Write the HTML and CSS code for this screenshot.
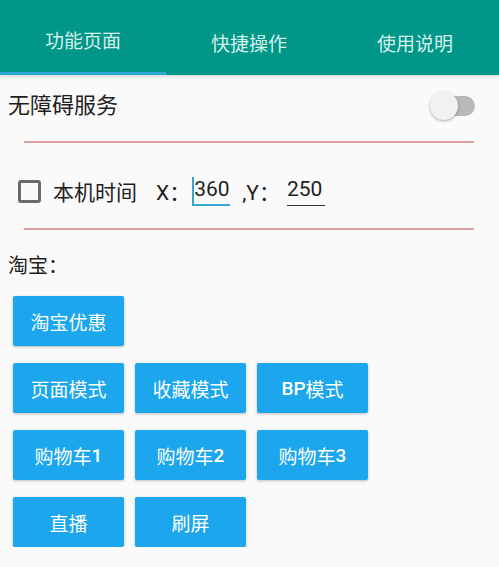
FILE: index.html
```html
<!DOCTYPE html>
<html lang="zh">
<head>
<meta charset="utf-8">
<link rel="stylesheet" href="styles.css">
</head>
<body>
<div class="tabs">
  <div class="tab active">功能页面</div>
  <div class="tab">快捷操作</div>
  <div class="tab">使用说明</div>
</div>
<div class="row service">
  <span class="label">无障碍服务</span>
  <div class="switch"><div class="track"></div><div class="thumb"></div></div>
</div>
<div class="divider"></div>
<div class="row time">
  <span class="checkbox"></span>
  <span class="tlabel">本机时间</span>
  <span class="coord">X：</span>
  <span class="input focused"><span class="cursor"></span>360</span>
  <span class="coord sep">,Y：</span>
  <span class="input second">250</span>
</div>
<div class="divider"></div>
<div class="section">淘宝：</div>
<div class="buttons">
  <div class="brow"><div class="btn">淘宝优惠</div></div>
  <div class="brow"><div class="btn">页面模式</div><div class="btn">收藏模式</div><div class="btn"><span class="latin">BP</span>模式</div></div>
  <div class="brow"><div class="btn">购物车<span class="latin">1</span></div><div class="btn">购物车<span class="latin">2</span></div><div class="btn">购物车<span class="latin">3</span></div></div>
  <div class="brow"><div class="btn">直播</div><div class="btn">刷屏</div></div>
</div>
</body>
</html>
```

FILE: styles.css
```css
html, body {
  margin: 0;
  padding: 0;
  background: #fafafa;
  font-family: Roboto, "Noto Sans CJK SC", sans-serif;
  color: #1e1e1e;
}
.tabs {
  display: flex;
  height: 75px;
  background: #009688;
  box-shadow: 0 2px 3px rgba(0,0,0,0.12);
  position: relative;
}
.tab {
  width: 166px;
  box-sizing: border-box;
  display: flex;
  align-items: center;
  justify-content: center;
  padding-top: 9px;
  font-size: 19px;
  color: #d6f1ec;
}
.tab.active {
  border-bottom: 3px solid #2ea8d3;
  padding-top: 6px;
}
.row {
  display: flex;
  align-items: center;
}
.service {
  height: 61px;
  box-sizing: border-box;
  padding: 0 24px 6px 8px;
  justify-content: space-between;
}
.label {
  font-size: 22px;
}
.switch {
  position: relative;
  width: 38px;
  height: 28px;
  margin-top: 6px;
}
.track {
  position: absolute;
  left: 0;
  top: 4px;
  width: 38px;
  height: 20px;
  border-radius: 10px;
  background: #b9b9b9;
}
.thumb {
  position: absolute;
  left: -7px;
  top: 0;
  width: 28px;
  height: 28px;
  border-radius: 50%;
  background: #f1f1f1;
  box-shadow: 0 1px 3px rgba(0,0,0,0.3);
}
.divider {
  height: 2px;
  margin: 5px 25px 0 24px;
  background: #dfa2a2;
}
.time {
  height: 80px;
  box-sizing: border-box;
  padding: 16px 0 0 18px;
  font-size: 21px;
}
.checkbox {
  width: 17px;
  height: 17px;
  border: 3px solid #6a6a6a;
  border-radius: 3px;
  margin-right: 12px;
}
.tlabel {
  margin-right: 19px;
}
.coord.sep {
  margin-left: 12px;
}
.input {
  position: relative;
  display: inline-block;
  width: 38px;
  margin-left: 2px;
  padding-bottom: 3px;
  border-bottom: 1px solid #333;
  line-height: 26px;
}
.input.second {
  margin-left: 7px;
}
.input.focused {
  border-bottom: 2px solid #35a6cf;
  padding-bottom: 2px;
  padding-left: 2px;
  width: 36px;
}
.cursor {
  position: absolute;
  left: 0;
  top: 1px;
  width: 2px;
  height: 28px;
  background: #35a6cf;
}
.section {
  font-size: 20px;
  padding: 20px 0 0 8px;
  height: 46px;
}
.buttons {
  display: flex;
  flex-direction: column;
  gap: 17px;
  padding-left: 13px;
}
.brow {
  display: flex;
  gap: 11px;
}
.btn {
  width: 111px;
  height: 50px;
  border-radius: 2px;
  background: #1ba6ee;
  color: #fff;
  font-size: 19px;
  font-weight: 400;
  display: flex;
  align-items: center;
  justify-content: center;
  box-shadow: 0 1px 3px rgba(0,0,0,0.25);
}
.latin {
  font-weight: 500;
}
```
